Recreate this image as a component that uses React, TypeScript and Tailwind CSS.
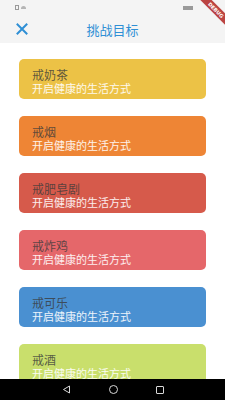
import React from 'react';

const goals = [
  { name: '戒奶茶', bg: 'bg-[#ecc246]' },
  { name: '戒烟', bg: 'bg-[#ee8535]' },
  { name: '戒肥皂剧', bg: 'bg-[#d65a4b]' },
  { name: '戒炸鸡', bg: 'bg-[#e5676a]' },
  { name: '戒可乐', bg: 'bg-[#4a90d1]' },
  { name: '戒酒', bg: 'bg-[#c9df6c]' },
];

const font = { fontFamily: '"Noto Sans CJK SC", "Noto Sans", sans-serif' };

export default function App() {
  return (
    <div className="relative w-[225px] h-[400px] overflow-hidden bg-white flex flex-col" style={font}>
      {/* status bar */}
      <div className="h-[15px] bg-[#f4f4f4] flex items-center justify-between px-[15px] shrink-0">
        <div className="flex items-center gap-[2px]">
          <div className="w-[4px] h-[5px] border border-[#9a9a9a]"></div>
          <div className="w-[5px] h-[3px] bg-[#b5b5b5] rounded-t-full"></div>
        </div>
        <div className="w-[10px] h-[4px] bg-[#9a9a9a] mr-[17px]"></div>
      </div>

      {/* app bar */}
      <div className="h-[28px] bg-[#f4f4f4] flex items-center shrink-0 relative">
        <svg className="absolute left-[16px] top-[8px]" width="12" height="12" viewBox="0 0 12 12">
          <path d="M1.5 1.5 L10.5 10.5 M10.5 1.5 L1.5 10.5" stroke="#2f8fd5" strokeWidth="2" strokeLinecap="square" />
        </svg>
        <div className="w-full text-center text-[13px] text-[#2f8fd5] leading-none">挑战目标</div>
      </div>

      {/* list */}
      <div className="flex-1 flex flex-col gap-[17px] px-[19px] pt-[16px] overflow-hidden">
        {goals.map((g) => (
          <div key={g.name} className={`${g.bg} h-[40px] rounded-[5px] flex flex-col justify-center gap-[1px] pl-[13px] pt-[4px] shrink-0`}>
            <div className="text-[12px] leading-[13px] text-[#3a3a3a]/80">{g.name}</div>
            <div className="text-[11px] leading-[13px] text-white/90">开启健康的生活方式</div>
          </div>
        ))}
      </div>

      {/* nav bar */}
      <div className="h-[21px] bg-black flex items-center justify-center gap-[38px] shrink-0">
        <svg width="9" height="9" viewBox="0 0 9 9">
          <path d="M7.5 1 L1.5 4.5 L7.5 8 Z" fill="none" stroke="#d8d8d8" strokeWidth="1" />
        </svg>
        <div className="w-[9px] h-[9px] rounded-full border border-[#d8d8d8]"></div>
        <div className="w-[8px] h-[8px] rounded-[1px] border border-[#d8d8d8]"></div>
      </div>

      {/* debug banner */}
      <div className="absolute top-[6px] right-[-19px] w-[56px] h-[8px] bg-[#b5312f]/90 rotate-45 flex items-center justify-center">
        <span className="text-[5px] font-bold text-white leading-none" style={{ fontFamily: '"DejaVu Sans", sans-serif' }}>DEBUG</span>
      </div>
    </div>
  );
}
